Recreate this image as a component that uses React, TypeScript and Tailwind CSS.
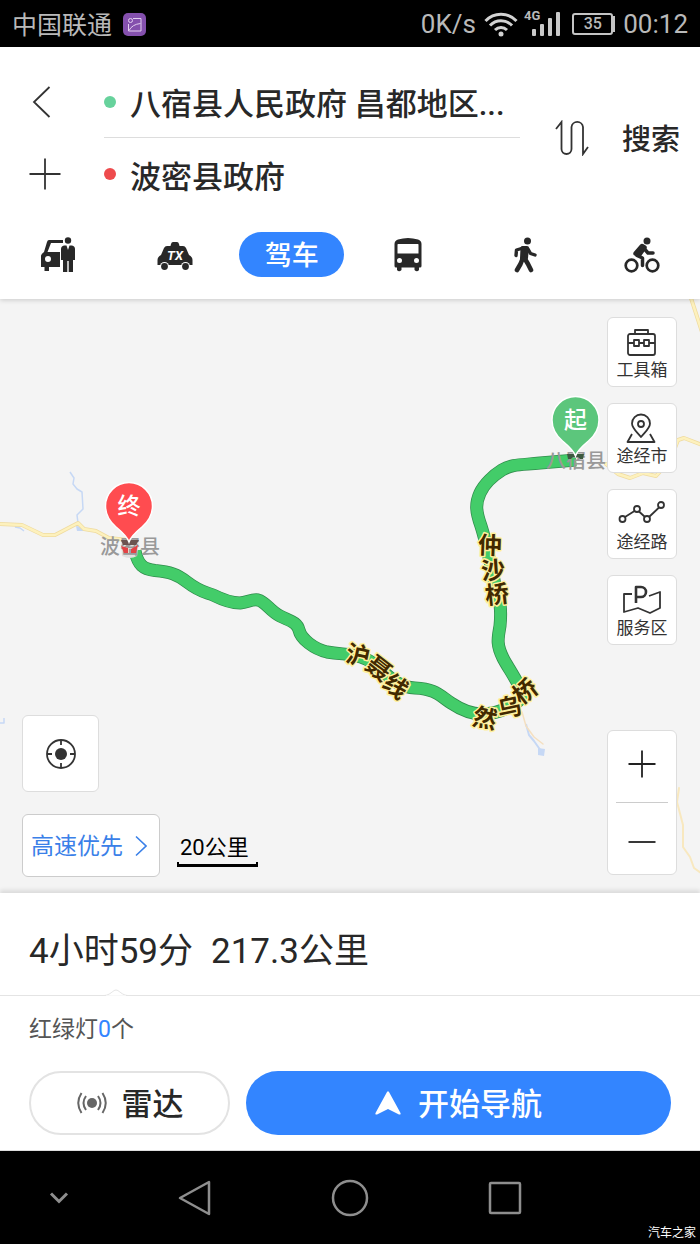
import type { ReactNode } from 'react'

type RoadLabel = { char: string; x: number; y: number; rotate: number }

const roadLabels: RoadLabel[] = [
  { char: '仲', x: 490, y: 545, rotate: 2 },
  { char: '沙', x: 493, y: 570, rotate: -4 },
  { char: '桥', x: 497, y: 594, rotate: -6 },
  { char: '沪', x: 358, y: 655, rotate: 12 },
  { char: '聂', x: 379, y: 668, rotate: 38 },
  { char: '线', x: 396, y: 686, rotate: 38 },
  { char: '然', x: 485, y: 718, rotate: 12 },
  { char: '乌', x: 509, y: 707, rotate: -12 },
  { char: '桥', x: 525, y: 691, rotate: -38 },
]

const routePath =
  'M135 551 C138 565 143 569 155 570.500 C170 572 177 574 187 582 C200 592 205 592 213 595 C225 601 232 603 240 603 C248 602 252 599 258 600 C266 602 270 611 280 616 C290 621 297 622 299 630 C301 639 314 649 327 652 C345 655 352 653 366 659 C384 668 392 687 415 688 C436 689 440 696 451 703 C463 711 472 714 482 714 C500 714 522 703 522 694 C520 684 508 668 503 658 C496 644 498 638 500 626 C502 605 499 600 495 585 C491 565 487 545 481 526 C476 512 475 504 480 493 C484 484 494 475 502 470 C512 464 522 465 540 463 L576 460'

function Pin({ x, y, label, color }: { x: number; y: number; label: string; color: string }) {
  return (
    <g transform={`translate(${x} ${y})`}>
      <path
        d="M0 36 C-2 30 -7 26 -13 21 C-20 15 -23.500 8 -23.500 0 A23.500 23.500 0 0 1 23.500 0 C23.500 8 20 15 13 21 C7 26 2 30 0 36Z"
        fill={color}
        stroke="#fff"
        strokeWidth="1.500"
      />
      <text x="0" y="8" textAnchor="middle" fontSize="23" fontWeight="500" fill="#fff">
        {label}
      </text>
    </g>
  )
}

function MapCanvas() {
  return (
    <svg
      className="absolute inset-0 h-full w-full"
      viewBox="0 299 700 594"
      preserveAspectRatio="xMidYMid slice"
      role="img"
      aria-label="路线地图"
    >
      {/* rivers and lakes */}
      <g fill="none" stroke="#c6d8f5" strokeWidth="1.500" strokeLinejoin="round">
        <path d="M70 472 L74 478 L73 484 L77 489 L82 492 L83 509 L77 515 L78 523" />
        <path d="M526 724 L529 735 L534 741 L541 751" strokeWidth="2" />
        <path d="M15 527 L20 528 L24 531 M0 723 H4 V718" />
      </g>
      <path d="M76 526 L84 527 L88 531 L77 531Z M538 748 L545 749 L544 756 L538 755Z" fill="#c6d8f5" />

      {/* secondary roads */}
      <g fill="none" strokeLinejoin="round" strokeLinecap="round">
        <g stroke="#efdba0" strokeWidth="4">
          <path d="M-2 524 L22 525 L43 535 L55 535 L78 523 L84 529 L96 531 L109 538 L128 540" />
          <path d="M690 295 L702 332" />
          <path d="M606 464 L618 474 L630 478 L643 473 L656 476 L670 461 L678 440 L684 438 L702 445" />
        </g>
        <g stroke="#fdf1bd" strokeWidth="2.500">
          <path d="M-2 524 L22 525 L43 535 L55 535 L78 523 L84 529 L96 531 L109 538 L128 540" />
          <path d="M690 295 L702 332" />
          <path d="M606 464 L618 474 L630 478 L643 473 L656 476 L670 461 L678 440 L684 438 L702 445" />
        </g>
        <path
          d="M679 788 L677 802 L683 825 L683 847 L690 857 L694 868 L701 873"
          stroke="#f8e8bf"
          strokeWidth="2"
        />
        <path d="M522 712 L526 726 L534 737 L543 744" stroke="#f4dfc0" strokeWidth="1.500" />
      </g>

      {/* planned route */}
      <path d={routePath} fill="none" stroke="#2f8c4b" strokeWidth="13" strokeLinejoin="round" />
      <path d={routePath} fill="none" stroke="#43cc69" strokeWidth="11.500" strokeLinejoin="round" />

      <g fontSize="20" fontWeight="500" fill="#999" textAnchor="middle">
        <path d="M121 540 H139 L137 556 Q130 560 122 556Z" fill="#e2e0e0" />
        <text x="130" y="554">波密县</text>
        <text x="576" y="468">八宿县</text>
      </g>
      <path d="M121 540 H139 L136 545 H123Z" fill="#6b5350" />
      <path d="M121 546 L128 548 V553 H124Z M138 545 L131 549 V553 H136Z" fill="#e34245" />
      <path d="M567 454 H584 L583 459 H580 L578 457 H573 L571 459 H568Z" fill="#3c5a40" />

      <g fontSize="24" fontWeight="700" textAnchor="middle" fill="#422900" stroke="#fff09c" strokeWidth="3" strokeLinejoin="round" paintOrder="stroke">
        {roadLabels.map((l) => (
          <text key={`${l.char}${l.x}`} transform={`translate(${l.x} ${l.y}) rotate(${l.rotate})`} y="9">
            {l.char}
          </text>
        ))}
      </g>

      <Pin x={575.5} y={420} label="起" color="#5cc67c" />
      <Pin x={129} y={506} label="终" color="#ff4c50" />
    </svg>
  )
}

function StatusBar() {
  return (
    <div className="flex h-[47px] items-center justify-between bg-black pt-px pr-3 pl-3 text-[26px] text-[#b9b9b9]">
      <div className="flex items-center gap-[11px]">
        <span className="pt-[3px] text-[25px]">中国联通</span>
        <svg width="23" height="23" viewBox="0 0 23 23" fill="none" stroke="#e3cff0">
          <rect width="23" height="23" rx="5" fill="#8450ad" stroke="none" />
          <path d="M10 5.500 H18 V18 H5.500 V11" />
          <path d="M6 17.500 C8 13.500 12 11 17.500 10.500" />
          <circle cx="7.500" cy="7.500" r="2" />
        </svg>
      </div>
      <div className="flex items-center">
        <span>0K/s</span>
        <svg className="ml-2" width="34" height="26" viewBox="0 0 34 26" fill="none" stroke="#d2d2d2" strokeWidth="3">
          <path d="M1.500 10 C10 1 24 1 32.500 10" />
          <path d="M6 14.500 C12 8 22 8 28 14.500" />
          <path d="M11 19 C14.500 15.500 19.500 15.500 23 19" />
          <circle cx="17" cy="23" r="2.500" fill="#d2d2d2" stroke="none" />
        </svg>
        <div className="ml-[6px] flex h-[30px] items-end pb-[3px]">
          <span className="-mr-[9px] self-start text-[13px] leading-none font-bold">4G</span>
          <svg width="29" height="25" viewBox="0 0 29 25" fill="#c9c9c9">
            <rect x="1" y="18" width="4" height="7" rx="1" />
            <rect x="9" y="13" width="4" height="12" rx="1" />
            <rect x="17" y="7" width="4" height="18" rx="1" />
            <rect x="25" y="1" width="4" height="24" rx="1" />
          </svg>
        </div>
        <div className="ml-3 flex items-center">
          <span className="flex h-[22px] w-[41px] items-center justify-center rounded-[3px] border-2 border-[#c4c4c4] text-base font-medium">35</span>
          <span className="h-4 w-[2px] bg-[#c4c4c4]" />
        </div>
        <span className="ml-2">00:12</span>
      </div>
    </div>
  )
}

function RouteInput({ label, value, dot }: { label: string; value: string; dot: string }) {
  return (
    <label className="flex h-[72px] items-center">
      <span className={`size-3 shrink-0 rounded-full ${dot}`} />
      <input
        aria-label={label}
        defaultValue={value}
        className="ml-[14px] h-12 w-full min-w-0 truncate bg-transparent text-[31px] font-medium outline-none"
      />
    </label>
  )
}

const modes: { name: string; icon: ReactNode }[] = [
  {
    name: '打车',
    icon: (
      <svg width="36" height="36" viewBox="0 0 36 36" fill="currentColor">
        <path
          fillRule="evenodd"
          d="M9 3 H23 V6 H11 L7.500 15 H20 V30 H9 V34 H4.500 V30 H1 V19 Q1 17 4 15 L7 5 Q7.500 3 9 3Z M8 19 A3 3 0 1 0 8 25 A3 3 0 1 0 8 19Z"
        />
        <circle cx="28" cy="4" r="4.500" fill="#fff" />
        <circle cx="28" cy="3.500" r="3.200" />
        <path d="M24 8.500 H26.500 L28 13 L29.500 8.500 H32 Q35 9 35 12 V23 H33 V35 H28.700 V24 H27.300 V35 H23 V23 H21 V12 Q21 9 24 8.500Z" />
      </svg>
    ),
  },
  {
    name: '出租车',
    icon: (
      <svg width="36" height="36" viewBox="0 0 36 36" fill="currentColor">
        <path d="M14 7 Q14.500 5 16 5 H20 Q21.500 5 22 7 L22.500 9 H26 Q28 9 29 11 L32 18 Q35.500 20 35.500 23 V28 H0.500 V23 Q0.500 20 4 18 L7 11 Q8 9 10 9 H13.500Z" />
        <circle cx="7.500" cy="29.500" r="4.500" fill="#fff" />
        <circle cx="28.500" cy="29.500" r="4.500" fill="#fff" />
        <circle cx="7.500" cy="29.500" r="3.400" />
        <circle cx="28.500" cy="29.500" r="3.400" />
        <text x="18" y="23" textAnchor="middle" fontSize="13" fontWeight="700" fontStyle="italic" fill="#fff">TX</text>
      </svg>
    ),
  },
  { name: '驾车', icon: null },
  {
    name: '公交',
    icon: (
      <svg width="36" height="36" viewBox="0 0 36 36" fill="currentColor">
        <path
          fillRule="evenodd"
          d="M8 2.500 Q18 -0.500 28 2.500 Q31.500 3.500 31.500 7 V29 Q31.500 30.500 30 30.500 H29 V33 Q27 35.500 24.500 33 V30.500 H11.500 V33 Q9 35.500 7 33 V30.500 H6 Q4.500 30.500 4.500 29 V7 Q4.500 3.500 8 2.500Z M8 7 Q7.500 7 7.500 8 V16.500 H28.500 V8 Q28.500 7 28 7Z M9.500 21 A2.500 2.500 0 1 0 9.500 26 A2.500 2.500 0 1 0 9.500 21Z M26.500 21 A2.500 2.500 0 1 0 26.500 26 A2.500 2.500 0 1 0 26.500 21Z"
        />
      </svg>
    ),
  },
  {
    name: '步行',
    icon: (
      <svg width="36" height="36" viewBox="0 0 36 36" fill="none" stroke="currentColor" strokeLinecap="round" strokeLinejoin="round">
        <circle cx="20.500" cy="4" r="3.500" fill="currentColor" stroke="none" />
        <path d="M16 11 L9.500 13 L9 18.500 M21 12 L23.500 16.500 L28 18" strokeWidth="3.400" />
        <path d="M15.500 11 H20 L19 21 L15 21.500Z" fill="currentColor" strokeWidth="4" />
        <path d="M15.500 22 L13.500 27 L10 33 M18 22 L21 27 L24 33" strokeWidth="4.600" />
      </svg>
    ),
  },
  {
    name: '骑行',
    icon: (
      <svg width="36" height="36" viewBox="0 0 36 36" fill="none" stroke="currentColor" strokeLinecap="round" strokeLinejoin="round">
        <circle cx="23" cy="4" r="3.500" fill="currentColor" stroke="none" />
        <circle cx="7.500" cy="28.500" r="5.800" strokeWidth="2.700" />
        <circle cx="28.500" cy="28.500" r="5.800" strokeWidth="2.700" />
        <path d="M18 9 L20.500 10.500 L15.500 17.500 L11.500 16.500Z" fill="currentColor" strokeWidth="4.500" />
        <path d="M21 12.500 L24 16 H29 M13 18.500 L18.500 21 V28.500" strokeWidth="3.500" />
      </svg>
    ),
  },
]

function RouteHeader() {
  return (
    <header className="relative z-10 bg-white shadow-[0_1px_5px_rgba(0,0,0,0.18)]">
      <div className="flex pt-[19px]">
        <div className="flex w-[104px] shrink-0 flex-col pl-[29px]">
          <button type="button" aria-label="返回" className="flex h-[72px] items-center">
            <svg width="32" height="32" viewBox="0 0 32 32" fill="none" stroke="#333" strokeWidth="1.800">
              <path d="M20.500 1 L5 16 L20.500 31" />
            </svg>
          </button>
          <button type="button" aria-label="添加途经点" className="flex h-[72px] items-center">
            <svg width="32" height="32" viewBox="0 0 32 32" fill="none" stroke="#333" strokeWidth="1.800">
              <path d="M16 0.500 V31.500 M0.500 16 H31.500" />
            </svg>
          </button>
        </div>
        <div className="min-w-0 flex-1 divide-y divide-[#ddd]">
          <RouteInput label="起点" value="八宿县人民政府 昌都地区..." dot="bg-[#67d29c]" />
          <RouteInput label="终点" value="波密县政府" dot="bg-[#ee4b4d]" />
        </div>
        <div className="flex w-[180px] shrink-0 items-center justify-between pr-5 pl-[34px]">
          <button type="button" aria-label="交换起终点">
            <svg width="36" height="36" viewBox="0 0 36 36" fill="none" stroke="#333" strokeWidth="1.800">
              <path d="M2 9 L7.500 2 V29 A5 5 0 0 0 17.500 29 V7 A5.800 5.800 0 0 1 29 7 V34 L34 27" />
            </svg>
          </button>
          <button type="button" className="pt-[6px] text-[29px] font-medium">搜索</button>
        </div>
      </div>
      <nav className="grid h-[89px] grid-cols-6 items-center justify-items-center">
        {modes.map((m) =>
          m.icon ? (
            <button key={m.name} type="button" aria-label={m.name}>
              {m.icon}
            </button>
          ) : (
            <button key={m.name} type="button" className="h-[45px] w-[105px] rounded-full bg-[#3385ff] pt-1 text-[27px] leading-none font-medium text-white">
              {m.name}
            </button>
          ),
        )}
      </nav>
    </header>
  )
}

const tools = [
  {
    name: '工具箱',
    icon: (
      <>
        <rect x="6" y="6" width="27" height="21" rx="2" />
        <path d="M13 6 V2 H26 V6 M6 15 H12 M17 15 H22 M27 15 H33" />
        <rect x="12" y="12" width="5" height="6" />
        <rect x="22" y="12" width="5" height="6" />
      </>
    ),
  },
  {
    name: '途经市',
    icon: (
      <>
        <path d="M19 23 C14 17 10 14 10 9.500 A9 9 0 0 1 28 9.500 C28 14 24 17 19 23Z" />
        <circle cx="19" cy="10" r="3" />
        <path d="M10 20 L5.500 28 H32.500 L28 20" />
      </>
    ),
  },
  {
    name: '途经路',
    icon: (
      <>
        <circle cx="0.500" cy="19" r="3" />
        <circle cx="15" cy="9" r="3" />
        <circle cx="25" cy="19" r="3" />
        <circle cx="39" cy="5" r="3" />
        <path d="M3 17 L12.500 11 M17 11.500 L23 17 M27 17 L37 7.500" />
      </>
    ),
  },
  {
    name: '服务区',
    icon: (
      <>
        <path d="M10 8 H2 V26 L16 22 L28 27 L38 22 V6 L27 10" />
        <path d="M14 17 V1 H19 A5 5 0 0 1 19 11 H14" strokeWidth="2.600" />
      </>
    ),
  },
]

function MapView() {
  return (
    <main className="relative flex h-[594px] justify-between overflow-hidden bg-[#f4f4f4]">
      <MapCanvas />
      <div className="relative flex flex-col justify-end pb-4 pl-[22px]">
        <button
          type="button"
          aria-label="定位"
          className="mb-[22px] flex size-[77px] items-center justify-center rounded-md border border-[#ddd] bg-white"
        >
          <svg width="32" height="32" viewBox="0 0 32 32" fill="none" stroke="#333" strokeWidth="1.800">
            <circle cx="16" cy="16" r="14" />
            <circle cx="16" cy="16" r="6" fill="#333" stroke="none" />
            <path d="M16 2 V7 M16 25 V30 M2 16 H7 M25 16 H30" />
          </svg>
        </button>
        <div className="flex items-end gap-[17px]">
          <button
            type="button"
            className="flex h-[63px] w-[138px] items-center gap-3 rounded-md border border-[#ccc] bg-white pl-2 text-[23px] whitespace-nowrap text-[#3a80e8]"
          >
            <span className="pt-1">高速优先</span>
            <svg width="12" height="22" viewBox="0 0 12 22" fill="none" stroke="currentColor" strokeWidth="1.600">
              <path d="M1 1.500 L11 11 L1 20.500" />
            </svg>
          </button>
          <div className="mb-[10px] w-[81px] text-[22px] leading-7 text-black">
            <p className="pl-[3px]">20公里</p>
            <div className="h-[5px] border-2 border-t-0 border-b-3 border-black" />
          </div>
        </div>
      </div>
      <div className="relative flex flex-col justify-between pt-[18px] pr-[23px] pb-[18px]">
        <div className="flex flex-col gap-4">
          {tools.map((t) => (
            <button
              key={t.name}
              type="button"
              className="flex size-[70px] flex-col items-center rounded-md border border-[#ddd] bg-white pt-[10px] text-[17px] leading-6 text-[#333]"
            >
              <svg className="overflow-visible" width="40" height="30" viewBox="0 0 40 30" fill="none" stroke="#333" strokeWidth="1.800" strokeLinejoin="round">
                {t.icon}
              </svg>
              {t.name}
            </button>
          ))}
        </div>
        <div className="flex h-[145px] w-[70px] flex-col items-center rounded-md border border-[#ddd] bg-white">
          <button type="button" aria-label="放大" className="flex w-full flex-1 items-center justify-center pb-[6px]">
            <svg width="28" height="28" viewBox="0 0 28 28" stroke="#222" strokeWidth="1.800">
              <path d="M14 0.500 V27.500 M0.500 14 H27.500" />
            </svg>
          </button>
          <span className="h-px w-[52px] bg-[#ccc]" />
          <button type="button" aria-label="缩小" className="flex w-full flex-1 items-center justify-center pt-[6px]">
            <svg width="28" height="28" viewBox="0 0 28 28" stroke="#222" strokeWidth="1.800">
              <path d="M0.500 14 H27.500" />
            </svg>
          </button>
        </div>
      </div>
    </main>
  )
}

function RoutePanel() {
  return (
    <section className="relative border-b border-[#ddd] bg-white shadow-[0_-3px_4px_rgba(0,0,0,0.10)]">
      <div className="relative flex h-[103px] items-center gap-[18px] border-b border-[#e4e4e4] px-[29px] pt-4 text-[35px]">
        <span>4小时59分</span>
        <span>217.3公里</span>
        <svg className="absolute -bottom-px left-[104px]" width="24" height="9" viewBox="0 0 24 9" fill="#fff" stroke="#e4e4e4">
          <path d="M0 8.500 C6 8.500 9 3 12 3 C15 3 18 8.500 24 8.500" />
          <path d="M2 9 H22" stroke="#fff" />
        </svg>
      </div>
      <p className="px-[29px] pt-[17px] text-[23px] leading-[34px] text-[#555]">
        红绿灯<span className="text-[#3385ff]">0</span>个
      </p>
      <div className="flex gap-4 px-[29px] pt-6 pb-[15px] text-[31px] leading-none font-medium">
        <button
          type="button"
          className="flex h-16 w-[201px] items-center justify-center gap-[14px] rounded-full border-2 border-[#e3e3e3]"
        >
          <svg width="32" height="24" viewBox="0 0 32 24" fill="none" stroke="#666" strokeWidth="2">
            <circle cx="16" cy="12" r="5" fill="#666" stroke="none" />
            <path d="M10 5 Q5 12 10 19 M22 5 Q27 12 22 19 M5.500 2 Q-1 12 5.500 22 M26.500 2 Q33 12 26.500 22" />
          </svg>
          <span className="pt-[2px]">雷达</span>
        </button>
        <button type="button" className="flex h-16 flex-1 items-center justify-center gap-[17px] rounded-full bg-[#3385ff] text-white">
          <svg width="26" height="24" viewBox="0 0 26 24" fill="currentColor">
            <path d="M12 1 Q13 -0.500 14 1 L25.500 22 Q26 24 24 23.500 L13 18 L2 23.500 Q0 24 0.500 22Z" />
          </svg>
          <span className="pt-[2px]">开始导航</span>
        </button>
      </div>
    </section>
  )
}

function NavBar() {
  return (
    <footer className="relative grid h-[94px] grid-cols-[117px_1fr_1fr_1fr_117px] items-center justify-items-center bg-black text-[#8e8e8e]">
      <button type="button" aria-label="收起">
        <svg width="20" height="12" viewBox="0 0 20 12" fill="none" stroke="currentColor" strokeWidth="3">
          <path d="M2 1.500 L10 9.500 L18 1.500" />
        </svg>
      </button>
      <button type="button" aria-label="后退">
        <svg width="36" height="38" viewBox="0 0 36 38" fill="none" stroke="currentColor" strokeWidth="2.500" strokeLinejoin="round">
          <path d="M32 3 V35 L3 19Z" />
        </svg>
      </button>
      <button type="button" aria-label="主屏幕">
        <svg width="38" height="38" viewBox="0 0 38 38" fill="none" stroke="currentColor" strokeWidth="2.500">
          <circle cx="19" cy="19" r="17" />
        </svg>
      </button>
      <button type="button" aria-label="最近任务">
        <svg width="34" height="34" viewBox="0 0 34 34" fill="none" stroke="currentColor" strokeWidth="2.500">
          <rect x="2" y="2" width="30" height="30" rx="1" />
        </svg>
      </button>
      <span className="absolute right-1 bottom-1 text-xs leading-4 text-white">汽车之家</span>
    </footer>
  )
}

export default function App() {
  return (
    <div className="min-h-screen bg-black font-[Roboto,'Noto_Sans_CJK_SC',sans-serif] text-[#282828]">
      <StatusBar />
      <RouteHeader />
      <MapView />
      <RoutePanel />
      <NavBar />
    </div>
  )
}
